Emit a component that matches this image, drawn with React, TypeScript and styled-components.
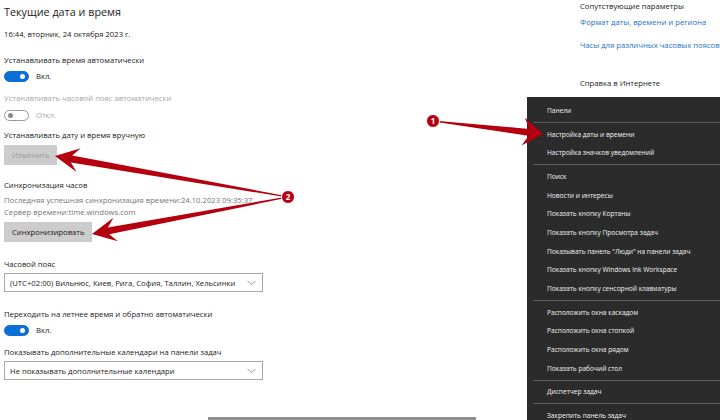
import React from "react";
import styled, { createGlobalStyle } from "styled-components";

const GlobalStyle = createGlobalStyle`
  html, body {
    margin: 0;
    padding: 0;
    background: #ffffff;
  }
  body {
    font-family: "Open Sans", "Noto Sans", sans-serif;
    color: #1b1b1b;
  }
`;

const menuGroups = [
  ["Панели"],
  ["Настройка даты и времени", "Настройка значков уведомлений"],
  [
    "Поиск",
    "Новости и интересы",
    "Показать кнопку Кортаны",
    "Показать кнопку Просмотра задач",
    "Показывать панель \"Люди\" на панели задач",
    "Показать кнопку Windows Ink Workspace",
    "Показать кнопку сенсорной клавиатуры",
  ],
  [
    "Расположить окна каскадом",
    "Расположить окна стопкой",
    "Расположить окна рядом",
    "Показать рабочий стол",
  ],
  ["Диспетчер задач"],
  ["Закрепить панель задач"],
];

type Arrow = { x0: number; y0: number; x1: number; y1: number; len: number; half: number };

const arrows: Arrow[] = [
  { x0: 433, y0: 121, x1: 543, y1: 134, len: 20, half: 14 },
  { x0: 288, y0: 197, x1: 55, y1: 156, len: 24, half: 12 },
  { x0: 288, y0: 197, x1: 92, y1: 234, len: 24, half: 12 },
];

const arrowPoints = (a: Arrow) => {
  const dx = a.x1 - a.x0;
  const dy = a.y1 - a.y0;
  const l = Math.hypot(dx, dy);
  const ux = dx / l;
  const uy = dy / l;
  const px = -uy;
  const py = ux;
  const neckX = a.x1 - ux * a.len * 0.7;
  const neckY = a.y1 - uy * a.len * 0.7;
  const barbX = a.x1 - ux * a.len;
  const barbY = a.y1 - uy * a.len;
  const w0 = 0.6;
  const w1 = 3.5;
  const pts = [
    [a.x0 + px * w0, a.y0 + py * w0],
    [neckX + px * w1, neckY + py * w1],
    [barbX + px * a.half, barbY + py * a.half],
    [a.x1, a.y1],
    [barbX - px * a.half, barbY - py * a.half],
    [neckX - px * w1, neckY - py * w1],
    [a.x0 - px * w0, a.y0 - py * w0],
  ];
  return pts.map((p) => p.map((v) => v.toFixed(1)).join(",")).join(" ");
};

const App = () => {
  return (
    <Page>
      <GlobalStyle />
      <Main>
        <Settings>
          <Title>Текущие дата и время</Title>
          <Label $top={4}>16:44, вторник, 24 октября 2023 г.</Label>

          <Label $top={12}>Устанавливать время автоматически</Label>
          <ToggleRow $top={2}>
            <Toggle $on />
            <ToggleText>Вкл.</ToggleText>
          </ToggleRow>

          <Label $top={8} $muted>
            Устанавливать часовой пояс автоматически
          </Label>
          <ToggleRow $top={3}>
            <Toggle />
            <ToggleText $muted>Откл.</ToggleText>
          </ToggleRow>

          <Label $top={6}>Устанавливать дату и время вручную</Label>
          <Button $top={3} $disabled>
            Изменить
          </Button>

          <Label $top={13}>Синхронизация часов</Label>
          <Info $top={2}>
            Последняя успешная синхронизация времени:24.10.2023 09:35:37
            <br />
            Сервер времени:time.windows.com
          </Info>
          <Button $top={4}>Синхронизировать</Button>

          <Label $top={15}>Часовой пояс</Label>
          <Select $top={2}>
            <span>(UTC+02:00) Вильнюс, Киев, Рига, София, Таллин, Хельсинки</span>
            <Chevron />
          </Select>

          <Label $top={15}>Переходить на летнее время и обратно автоматически</Label>
          <ToggleRow $top={2}>
            <Toggle $on />
            <ToggleText>Вкл.</ToggleText>
          </ToggleRow>

          <Label $top={8}>Показывать дополнительные календари на панели задач</Label>
          <Select $top={2}>
            <span>Не показывать дополнительные календари</span>
            <Chevron />
          </Select>

          <BottomEdge />
        </Settings>

        <Related>
          <RelatedTitle>Сопутствующие параметры</RelatedTitle>
          <Link $top={4}>Формат даты, времени и региона</Link>
          <Link $top={11}>Часы для различных часовых поясов</Link>
          <RelatedTitle $top={26}>Справка в Интернете</RelatedTitle>
        </Related>
      </Main>

      <ContextMenu>
        {menuGroups.map((group, gi) => (
          <React.Fragment key={gi}>
            {gi > 0 && <Separator />}
            {group.map((item) => (
              <MenuItem key={item}>{item}</MenuItem>
            ))}
          </React.Fragment>
        ))}
      </ContextMenu>

      <Overlay viewBox="0 0 720 420" width="720" height="420">
        {arrows.map((a, i) => (
          <polygon key={i} points={arrowPoints(a)} fill="#b5000f" />
        ))}
        <circle cx="433" cy="121" r="6.5" fill="#b5000f" stroke="#ffffff" strokeWidth="1" />
        <text x="433" y="124" fontSize="8" fontWeight="700" fill="#fff" textAnchor="middle" fontFamily="Open Sans, sans-serif">
          1
        </text>
        <circle cx="288" cy="197" r="6.5" fill="#b5000f" stroke="#ffffff" strokeWidth="1" />
        <text x="288" y="200" fontSize="8" fontWeight="700" fill="#fff" textAnchor="middle" fontFamily="Open Sans, sans-serif">
          2
        </text>
      </Overlay>
    </Page>
  );
};

const Chevron = () => (
  <svg width="9" height="6" viewBox="0 0 9 6">
    <polyline points="0.5,0.8 4.5,4.8 8.5,0.8" fill="none" stroke="#888" strokeWidth="0.9" />
  </svg>
);

export default App;

const Page = styled.div`
  position: relative;
  width: 720px;
  height: 420px;
  overflow: hidden;
  background: #ffffff;
`;

const Main = styled.div`
  display: flex;
  height: 100%;
`;

const Settings = styled.div`
  flex-shrink: 0;
  display: flex;
  flex-direction: column;
  align-items: flex-start;
  padding: 1px 0 0 4px;
  width: 500px;
`;

const Related = styled.div`
  flex-shrink: 0;
  display: flex;
  flex-direction: column;
  margin-left: 76px;
`;

const Title = styled.div`
  font-size: 10.8px;
  line-height: 22px;
  color: #1b1b1b;
`;

const Label = styled.div<{ $top?: number; $muted?: boolean }>`
  margin-top: ${(p) => p.$top ?? 0}px;
  font-size: 7.7px;
  line-height: 14px;
  white-space: nowrap;
  color: ${(p) => (p.$muted ? "#a6a6a6" : "#1b1b1b")};
`;

const Info = styled.div<{ $top?: number }>`
  margin-top: ${(p) => p.$top ?? 0}px;
  font-size: 7.7px;
  line-height: 12px;
  color: #767676;
  white-space: nowrap;
`;

const ToggleRow = styled.div<{ $top?: number }>`
  margin-top: ${(p) => p.$top ?? 0}px;
  display: flex;
  align-items: center;
  gap: 7px;
  height: 14px;
`;

const Toggle = styled.div<{ $on?: boolean }>`
  position: relative;
  box-sizing: border-box;
  width: 25px;
  height: 11px;
  border-radius: 6px;
  background: ${(p) => (p.$on ? "#0a6fd6" : "#ffffff")};
  border: 1px solid ${(p) => (p.$on ? "#0a6fd6" : "#9a9a9a")};

  &::after {
    content: "";
    position: absolute;
    top: 2px;
    ${(p) => (p.$on ? "right: 3px;" : "left: 3px;")}
    width: 5px;
    height: 5px;
    border-radius: 50%;
    background: ${(p) => (p.$on ? "#ffffff" : "#8a8a8a")};
  }
`;

const ToggleText = styled.span<{ $muted?: boolean }>`
  font-size: 7.7px;
  color: ${(p) => (p.$muted ? "#a6a6a6" : "#1b1b1b")};
`;

const Button = styled.div<{ $top?: number; $disabled?: boolean }>`
  margin-top: ${(p) => p.$top ?? 0}px;
  height: 20px;
  padding: 0 8px;
  display: flex;
  align-items: center;
  background: #cccccc;
  font-size: 7.7px;
  color: ${(p) => (p.$disabled ? "#9a9a9a" : "#1b1b1b")};
`;

const Select = styled.div<{ $top?: number }>`
  margin-top: ${(p) => p.$top ?? 0}px;
  box-sizing: border-box;
  width: 259px;
  height: 19px;
  border: 1px solid #a8a8a8;
  display: flex;
  align-items: center;
  justify-content: space-between;
  padding: 0 6px 0 5px;
  font-size: 7.7px;
  color: #1b1b1b;
  white-space: nowrap;
`;

const BottomEdge = styled.div`
  margin-top: 37px;
  margin-left: 204px;
  width: 268px;
  height: 3px;
  background: #8e8e8e;
`;

const RelatedTitle = styled.div<{ $top?: number }>`
  margin-top: ${(p) => p.$top ?? 0}px;
  font-size: 7.7px;
  line-height: 12px;
  color: #1b1b1b;
  white-space: nowrap;
`;

const Link = styled.div<{ $top?: number }>`
  margin-top: ${(p) => p.$top ?? 0}px;
  font-size: 7.7px;
  line-height: 12px;
  color: #1a73c8;
  white-space: nowrap;
`;

const ContextMenu = styled.div`
  position: absolute;
  left: 527px;
  top: 97px;
  right: 0;
  bottom: 0;
  background: #2b2b2b;
  padding-top: 4px;
  display: flex;
  flex-direction: column;
`;

const MenuItem = styled.div`
  flex-shrink: 0;
  height: 18.7px;
  display: flex;
  align-items: center;
  padding-left: 20px;
  font-size: 6.6px;
  color: #f2f2f2;
  white-space: nowrap;
`;

const Separator = styled.div`
  flex-shrink: 0;
  height: 1px;
  margin: 2px 0 2px 6px;
  background: #5c5c5c;
`;

const Overlay = styled.svg`
  position: absolute;
  left: 0;
  top: 0;
  pointer-events: none;
`;
